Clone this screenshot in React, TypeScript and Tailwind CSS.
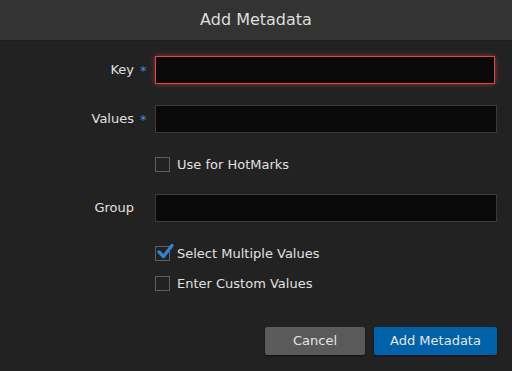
const font = { fontFamily: '"DejaVu Sans", Verdana, sans-serif' };

const Asterisk = (): JSX.Element => (
    <span className="w-[21px] pl-[6px] text-[13px] text-[#3b8ee0] leading-none">*</span>
);

const Check = ({ checked, label }: { checked?: boolean; label: string }): JSX.Element => (
    <div className="flex items-center h-[15px]">
        <div className="ml-[155px] relative w-[15px] h-[15px] border border-[#5e5e5e]">
            {checked && (
                <svg className="absolute left-[1px] top-[-4px]" width="17" height="16" viewBox="0 0 17 16">
                    <path d="M2 9 L6.5 13.5 L15 2.5" fill="none" stroke="#2f86d6" strokeWidth="3.2" strokeLinecap="round" strokeLinejoin="round" />
                </svg>
            )}
        </div>
        <span className="ml-[7px] text-[13px] text-[#e0e0e0]">{label}</span>
    </div>
);

const App = (): JSX.Element => {
    return (
        <div className="w-[512px] h-[371px] bg-[#222222] overflow-hidden" style={font}>
            <div className="h-[41px] bg-[#333333] border-b border-[#1c1c1c] flex items-center justify-center">
                <span className="text-[16px] text-[#dedede]">Add Metadata</span>
            </div>

            <div className="pt-[15px]">
                <div className="flex items-center h-[28px]">
                    <div className="w-[134px] text-right text-[13px] text-[#e0e0e0]">Key</div>
                    <Asterisk />
                    <div className="flex-1 mr-[17px] h-[28px] bg-[#0a0a0a] border border-[#e04848] shadow-[0_0_5px_rgba(224,72,72,0.6)]" />
                </div>

                <div className="flex items-center h-[28px] mt-[21px]">
                    <div className="w-[134px] text-right text-[13px] text-[#e0e0e0]">Values</div>
                    <Asterisk />
                    <div className="flex-1 mr-[15px] h-[28px] bg-[#0a0a0a] border border-[#3a3a3a]" />
                </div>

                <div className="mt-[24px]">
                    <Check label="Use for HotMarks" />
                </div>

                <div className="flex items-center h-[28px] mt-[22px]">
                    <div className="w-[134px] text-right text-[13px] text-[#e0e0e0]">Group</div>
                    <span className="w-[21px]" />
                    <div className="flex-1 mr-[15px] h-[28px] bg-[#0a0a0a] border border-[#3a3a3a]" />
                </div>

                <div className="mt-[24px]">
                    <Check checked label="Select Multiple Values" />
                </div>
                <div className="mt-[15px]">
                    <Check label="Enter Custom Values" />
                </div>

                <div className="flex justify-end gap-[9px] mr-[15px] mt-[36px]">
                    <button className="w-[100px] h-[28px] rounded-[2px] bg-[#5a5a5a] text-[13px] text-[#e6e6e6] shadow-[0_1px_2px_rgba(0,0,0,0.5)]">Cancel</button>
                    <button className="w-[123px] h-[28px] rounded-[2px] bg-[#0062a8] text-[13px] text-[#e6e6e6] shadow-[0_1px_2px_rgba(0,0,0,0.5)]">Add Metadata</button>
                </div>
            </div>
        </div>
    );
};

export default App;
